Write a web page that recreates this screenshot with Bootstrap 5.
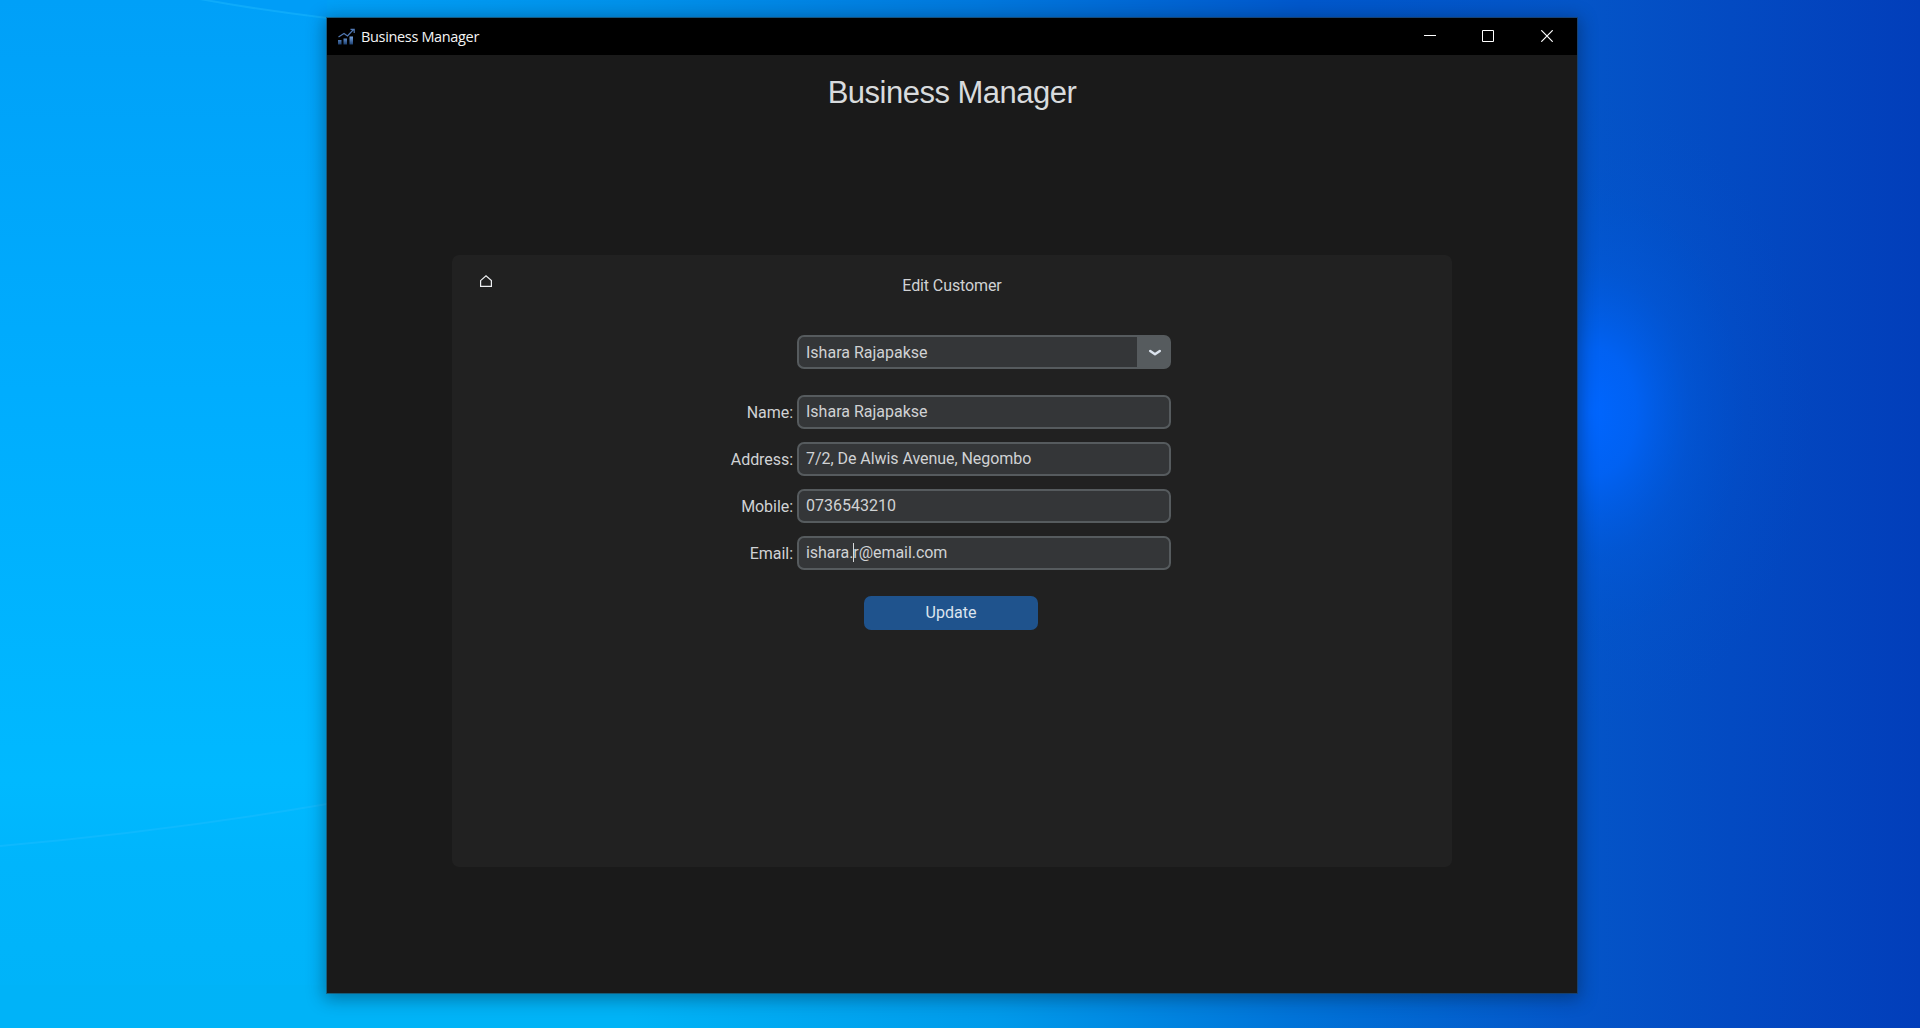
<!DOCTYPE html>
<html lang="en">
<head>
<meta charset="utf-8">
<meta name="viewport" content="width=device-width, initial-scale=1">
<title>Business Manager</title>
<link href="https://cdn.jsdelivr.net/npm/bootstrap@5.3.0/dist/css/bootstrap.min.css" rel="stylesheet">
<style>
body{font-family:Roboto,sans-serif;font-size:16px;color:#d0d2d4;height:1028px;overflow:hidden;padding-top:18px;position:relative;
 background:linear-gradient(90deg,#00a2f9 0,#009ff6 330px,#0091ea 640px,#0078dd 980px,#0058cc 1300px,#0455c8 1577px,#003cb8 1920px)}
.wallpaper{z-index:-1}
.app-window{width:1250px;height:975px;background:#1a1a1a;margin-left:327px;box-shadow:0 0 0 1px rgba(40,60,70,.55),0 3px 16px 3px rgba(0,20,40,.38)}
.title-bar{height:37px;background:#000;color:#f4f4f4;font-family:"Open Sans","Noto Sans",sans-serif;font-size:14.5px}
.app-logo{margin-left:10px;margin-right:6px}
.caption-text{letter-spacing:-.34px;line-height:20px}
.win-btns{margin-right:1px}
.win-btn{width:58.5px;height:37px;padding-bottom:1px}
.app-heading{font-family:"Liberation Sans",Arial,sans-serif;font-size:31px;letter-spacing:-.5px;line-height:36px;margin-top:20px;font-weight:400;color:#d8dbdd}
.panel{width:1000px;height:612px;margin:144px auto 0;background:#212121;border-radius:7px}
.panel-head{height:80px}
.home-btn{width:12px;margin:20px 0 0 28px}
.form-title{line-height:20px;padding-top:21px;margin-right:40px;letter-spacing:-.1px}
.form-grid{width:448px;margin-left:271px;gap:13px}
.field-label{width:70px;line-height:20px;padding-top:2px;text-align:right;letter-spacing:-.05px}
.entry,.entry:focus{height:34px;width:374px;background:#343638;border:2px solid #565b5e;border-radius:7px;color:#d0d2d4;font-size:16px;line-height:20px;padding:4px 7px 6px;box-shadow:none}
#address,#email{letter-spacing:-.05px}
.combo-btn{width:34px;background:#565b5e;border:0;border-radius:0 7px 7px 0}
.combo-row{margin-bottom:13px}
.combo-row .entry{width:340px;border-right:0;border-radius:7px 0 0 7px;padding-top:5px;padding-bottom:5px}
.chevron{margin:2px 0 0 2px}
.caret{width:1px;height:19px;background:#d8dadc;left:56px;top:7px}
.update-btn{width:174px;height:34px;background:#1f538d;color:#dce4ee;border:0;border-radius:7px;font-size:16px;line-height:20px;padding:0;margin:26px 0 0 412px}
</style>
</head>
<body>
<svg class="wallpaper position-absolute top-0 start-0" width="1920" height="1028" viewBox="0 0 1920 1028" aria-hidden="true">
 <defs>
  <linearGradient id="left" x2="0" y2="1"><stop offset="0" stop-color="#00a0f8"/><stop offset=".38" stop-color="#00adfe"/><stop offset=".76" stop-color="#00b9ff"/><stop offset=".84" stop-color="#00b5fc"/><stop offset="1" stop-color="#00b3f8"/></linearGradient>
  <linearGradient id="low" gradientUnits="userSpaceOnUse" x1="0" y1="0" x2="1577" y2="0"><stop offset="0" stop-color="#00b3f8"/><stop offset=".4" stop-color="#00b3f6"/><stop offset=".63" stop-color="#009aea"/><stop offset=".82" stop-color="#0073d8"/><stop offset="1" stop-color="#0455c8"/></linearGradient>
  <linearGradient id="right"><stop offset="0" stop-color="#0455c8"/><stop offset=".45" stop-color="#034ac2"/><stop offset="1" stop-color="#023eba"/></linearGradient>
  <radialGradient id="glow"><stop offset="0" stop-color="#0066ff"/><stop offset=".2" stop-color="#0064fa" stop-opacity=".85"/><stop offset=".45" stop-color="#005ce4" stop-opacity=".4"/><stop offset=".7" stop-color="#0056d6" stop-opacity=".15"/><stop offset="1" stop-color="#0050cc" stop-opacity="0"/></radialGradient>
 </defs>
 <path fill="url(#left)" d="M0 0H327V1028H0z"/>
 <path fill="url(#low)" d="M0 985H1577V1028H0z"/>
 <path fill="url(#right)" d="M1577 0H1920V1028H1577z"/>
 <ellipse cx="1592" cy="412" rx="220" ry="320" fill="url(#glow)"/>
 <path d="M200 -1Q260 10 327 18V-1z" fill="#0098f4" opacity=".4"/>
 <path d="M200 -1Q260 10 327 18M0 846Q170 831 327 804" fill="none" stroke="#22bdff" stroke-width="2" opacity=".4"/>
</svg>

<main class="app-window">
 <header class="title-bar d-flex align-items-center">
  <svg class="app-logo flex-shrink-0" width="18" height="18" viewBox="0 0 18 18" aria-hidden="true">
   <defs><linearGradient id="bars" x2="0" y2="1"><stop offset="0" stop-color="#78a5e2"/><stop offset="1" stop-color="#1b3f70"/></linearGradient></defs>
   <path fill="url(#bars)" d="M1 12h3.500v4.500H1zM6.500 10.500H10v6H6.500zM12.500 8.500H16v8h-3.500z"/>
   <path d="M1.500 9L7 5.500l3.500 2.500L16.500 1.500M13.500 1.300h3.700V5" fill="none" stroke="#5279b4" stroke-width="1.200"/>
  </svg>
  <span class="caption-text">Business Manager</span>
  <div class="win-btns ms-auto d-flex">
   <span class="win-btn d-flex align-items-center justify-content-center"><svg width="12" height="12"><path d="M0 5.500h12" stroke="#fff"/></svg></span>
   <span class="win-btn d-flex align-items-center justify-content-center"><svg width="12" height="12"><path d="M.5.5h11v11H.5z" stroke="#fff" fill="none"/></svg></span>
   <span class="win-btn d-flex align-items-center justify-content-center"><svg width="12" height="12"><path d="M.3.300l11.400 11.400M11.700.3L.3 11.700" stroke="#fff" stroke-width="1.200"/></svg></span>
  </div>
 </header>
 <h1 class="app-heading text-center mb-0">Business Manager</h1>

 <section class="panel">
  <div class="panel-head d-flex">
   <a class="home-btn d-block" href="#" aria-label="Home"><svg class="d-block" width="12" height="13" viewBox="0 0 12 13"><path d="M.6 5.600L6 .9l5.400 4.700v5.800H.6z" fill="none" stroke="#eef0f2" stroke-width="1.200"/></svg></a>
   <div class="form-title flex-grow-1 text-center">Edit Customer</div>
  </div>
  <form>
   <div class="form-grid d-flex flex-column">
    <div class="combo-row d-flex justify-content-end">
     <input class="form-control entry" value="Ishara Rajapakse" aria-label="Customer">
     <button type="button" class="combo-btn d-flex align-items-center justify-content-center p-0" aria-label="Open list"><svg class="chevron" width="14" height="8" viewBox="0 0 14 8"><path d="M2.200 2L7 5.200L11.800 2" fill="none" stroke="#dce4ee" stroke-width="2.500" stroke-linecap="round" stroke-linejoin="round"/></svg></button>
    </div>
    <div class="d-flex align-items-center gap-1"><label class="field-label" for="name">Name:</label><input id="name" class="form-control entry" value="Ishara Rajapakse"></div>
    <div class="d-flex align-items-center gap-1"><label class="field-label" for="address">Address:</label><input id="address" class="form-control entry" value="7/2, De Alwis Avenue, Negombo"></div>
    <div class="d-flex align-items-center gap-1"><label class="field-label" for="mobile">Mobile:</label><input id="mobile" class="form-control entry" value="0736543210"></div>
    <div class="d-flex align-items-center gap-1"><label class="field-label" for="email">Email:</label><div class="position-relative"><input id="email" class="form-control entry" value="ishara.r@email.com"><span class="caret position-absolute"></span></div></div>
   </div>
   <button type="button" class="btn update-btn">Update</button>
  </form>
 </section>
</main>
<script src="https://cdn.jsdelivr.net/npm/bootstrap@5.3.0/dist/js/bootstrap.bundle.min.js"></script>
</body>
</html>
